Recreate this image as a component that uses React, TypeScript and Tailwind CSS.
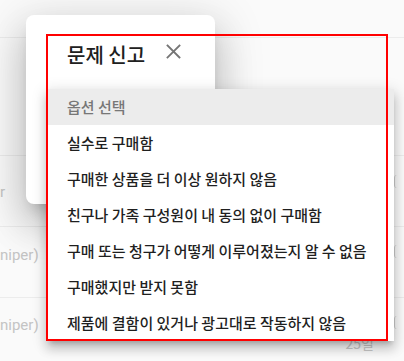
const options = [
  "실수로 구매함",
  "구매한 상품을 더 이상 원하지 않음",
  "친구나 가족 구성원이 내 동의 없이 구매함",
  "구매 또는 청구가 어떻게 이루어졌는지 알 수 없음",
  "구매했지만 받지 못함",
  "제품에 결함이 있거나 광고대로 작동하지 않음",
];

const App = () => {
  return (
    <div className="relative h-[361px] w-[404px] overflow-hidden bg-[#fafafa] font-['Noto_Sans_CJK_KR','Noto_Sans',sans-serif]">
      {/* Background list */}
      <div className="h-[38px] border-b border-[#ececec]" />
      <div className="h-[118px] border-b border-[#ececec]" />
      <div className="flex h-[71px] items-start justify-between border-b border-[#ececec]">
        <span className="mt-[25px] font-['Roboto',sans-serif] text-[15px] leading-[22px] text-[#c4c4c4]">r</span>
        <span className="mt-[19px] h-[13px] w-[10px] rounded-l-[3px] border-l border-[#cfcfcf]" />
      </div>
      <div className="flex h-[71px] items-start justify-between border-b border-[#ececec]">
        <span className="mt-[17px] font-['Roboto',sans-serif] text-[15px] leading-[22px] text-[#c4c4c4]">niper)</span>
        <span className="mt-[18px] h-[13px] w-[10px] rounded-l-[3px] border-l border-[#cfcfcf]" />
      </div>
      <div className="flex h-[70px] items-start justify-between">
        <span className="mt-[16px] font-['Roboto',sans-serif] text-[15px] leading-[22px] text-[#c4c4c4]">niper)</span>
        <div className="flex flex-col items-end">
          <span className="mt-[18px] h-[13px] w-[10px] rounded-l-[3px] border-l border-[#cfcfcf]" />
          <span className="mr-[30px] mt-[5px] text-[14px] leading-[18px] text-[#c8c8c8]">25일</span>
        </div>
      </div>

      {/* Dialog */}
      <div className="absolute left-[26px] top-[15px] h-[189px] w-[189px] rounded-[8px] bg-white shadow-[0_11px_15px_-7px_rgba(0,0,0,0.2),0_24px_38px_3px_rgba(0,0,0,0.14),0_9px_46px_8px_rgba(0,0,0,0.12)]">
        <div className="flex items-start gap-[21px] pl-[41px] pt-[26px]">
          <h2 className="text-[20px] font-medium leading-[28px] text-[#202020]">문제 신고</h2>
          <svg width="15" height="15" viewBox="0 0 15 15" className="mt-[3px]">
            <path d="M1.5 1.5 L13.5 13.5 M13.5 1.5 L1.5 13.5" stroke="#757575" strokeWidth="1.8" strokeLinecap="square" />
          </svg>
        </div>
      </div>

      {/* Select menu */}
      <div className="absolute left-[47px] top-[89px] w-[347px] bg-white shadow-[0_5px_5px_-3px_rgba(0,0,0,0.2),0_8px_10px_1px_rgba(0,0,0,0.14),0_3px_14px_2px_rgba(0,0,0,0.12)]">
        <div className="flex h-[36px] items-center bg-[#ececec] pl-[20px] text-[15px] font-medium text-[#777777]">
          옵션 선택
        </div>
        {options.map((option) => (
          <div key={option} className="flex h-[36px] items-center pl-[20px] text-[15px] font-medium text-[#1f1f1f]">
            {option}
          </div>
        ))}
      </div>

      {/* Highlight box */}
      <div className="absolute left-[46px] top-[34px] h-[307px] w-[342px] border-2 border-[#ff0000]" />
    </div>
  );
};

export default App;
